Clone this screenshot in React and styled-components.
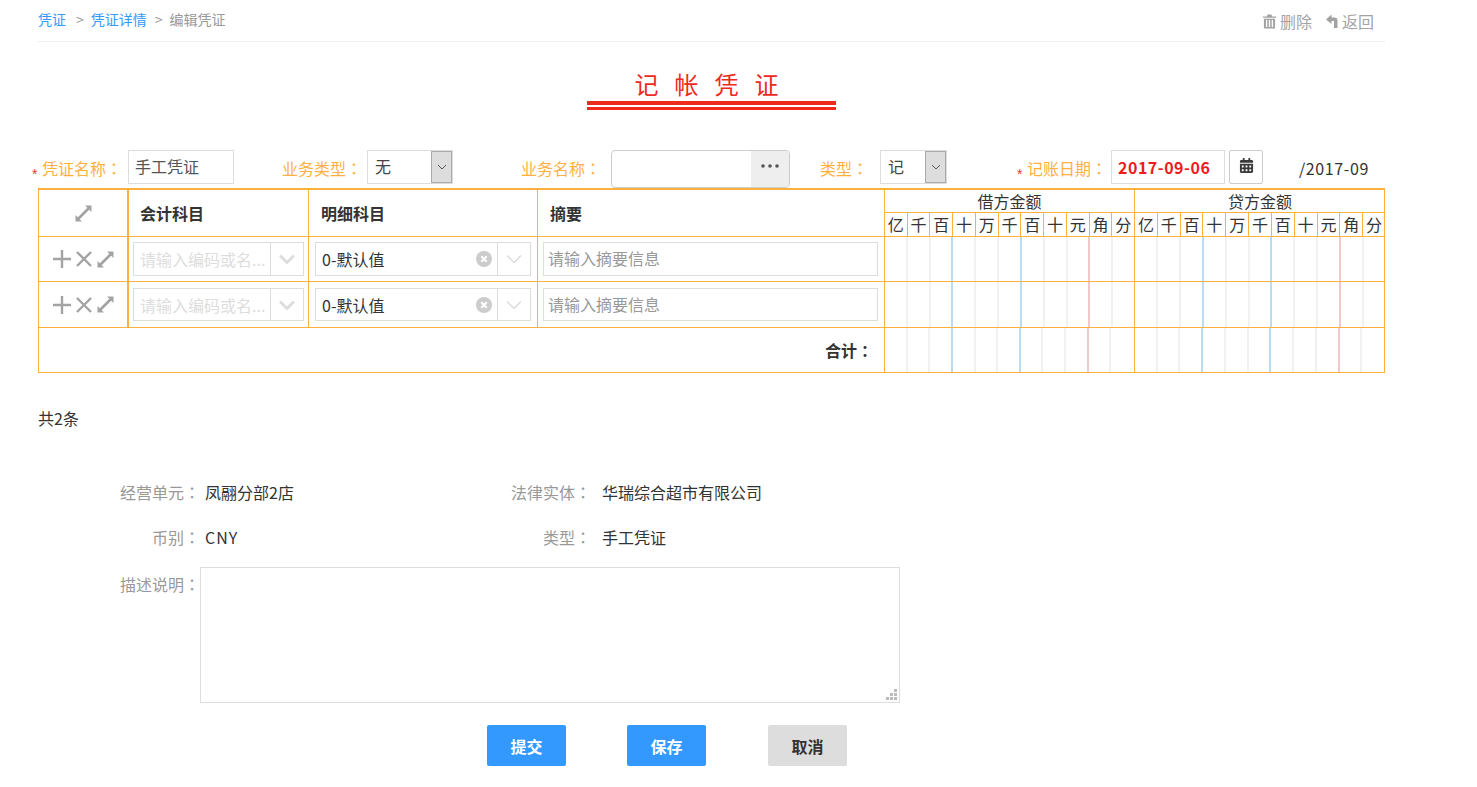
import React from 'react'
import styled, { createGlobalStyle } from 'styled-components'
import { FaCalendarAlt } from 'react-icons/fa'

const GlobalStyle = createGlobalStyle`
  html, body { margin: 0; padding: 0; background: #fff; }
  body {
    font-family: "Noto Sans CJK SC", "Noto Sans", sans-serif;
    color: #333;
  }
  * { box-sizing: border-box; }
`

const DIGITS = ['亿', '千', '百', '十', '万', '千', '百', '十', '元', '角', '分']
const ORANGE = '#ffb03f'

function ResizeIcon() {
  return (
    <svg width="17" height="17" viewBox="0 0 17 17" fill="#a3a3a3">
      <path d="M10 0.5H16.5V7L14.2 4.7 4.7 14.2 7 16.5H0.5V10L2.8 12.3 12.3 2.8Z" />
    </svg>
  )
}

function PlusIcon() {
  return (
    <svg width="18" height="18" viewBox="0 0 18 18" stroke="#a3a3a3" strokeWidth="2.4">
      <path d="M9 0V18M0 9H18" />
    </svg>
  )
}

function CloseIcon() {
  return (
    <svg width="16" height="16" viewBox="0 0 16 16" stroke="#a3a3a3" strokeWidth="2.4">
      <path d="M1 1L15 15M15 1L1 15" />
    </svg>
  )
}

function Chevron({ bold }) {
  return (
    <svg width="16" height="10" viewBox="0 0 16 10" fill="none" stroke="#ddd" strokeWidth={bold ? 3 : 1.5}>
      <path d="M1 1.5L8 8.5L15 1.5" />
    </svg>
  )
}

function ClearIcon() {
  return (
    <svg width="16" height="16" viewBox="0 0 16 16">
      <circle cx="8" cy="8" r="8" fill="#ccc" />
      <path d="M5.3 5.3L10.7 10.7M10.7 5.3L5.3 10.7" stroke="#fff" strokeWidth="2" />
    </svg>
  )
}

function TrashIcon() {
  return (
    <svg width="13" height="15" viewBox="0 0 14 15" fill="#a3a3a3">
      <path d="M5 0H9L10 2H14V3.5H0V2H4ZM1 4.5H13V15H1ZM3.2 6V13.5H4.6V6ZM6.3 6V13.5H7.7V6ZM9.4 6V13.5H10.8V6Z" fillRule="evenodd" />
    </svg>
  )
}

function BackIcon() {
  return (
    <svg width="12" height="14" viewBox="0 0 12 14" fill="#a3a3a3">
      <path d="M5.5 0.5L0 5.5L5.5 10V7H8V14H11.5V6.5C11.5 4.5 10.5 3.5 8.5 3.5H5.5Z" />
    </svg>
  )
}

function SelectArrow() {
  return (
    <svg width="10" height="6" viewBox="0 0 10 6" fill="none" stroke="#555" strokeWidth="1">
      <path d="M1 1L5 5L9 1" />
    </svg>
  )
}

function DotsIcon() {
  return (
    <svg width="18" height="4" viewBox="0 0 18 4" fill="#555">
      <circle cx="2" cy="2" r="1.8" />
      <circle cx="9" cy="2" r="1.8" />
      <circle cx="16" cy="2" r="1.8" />
    </svg>
  )
}

function DigitRow({ total, header }) {
  return (
    <Digits $total={total}>
      {DIGITS.map((d, i) => (
        <Digit key={i} $index={i} $header={header}>{header ? d : ''}</Digit>
      ))}
    </Digits>
  )
}

function EntryRow({ second }) {
  return (
    <Row $height={second ? 46 : 45}>
      <OpsCell>
        <PlusIcon />
        <CloseIcon />
        <ResizeIcon />
      </OpsCell>
      <SubjectCell $pad={second ? '6px 4px 0 4px' : '5px 4px 0 4px'}>
        <ComboBox $height={second ? 33 : 34}>
          <ComboText $placeholder>请输入编码或名...</ComboText>
          <ComboArrow><Chevron bold /></ComboArrow>
        </ComboBox>
      </SubjectCell>
      <DetailCell $pad={second ? '6px 6px 0 6px' : '5px 6px 0 6px'}>
        <ComboBox $height={second ? 33 : 34}>
          <ComboText>0-默认值</ComboText>
          <ClearIcon />
          <ComboArrow $gap><Chevron /></ComboArrow>
        </ComboBox>
      </DetailCell>
      <SummaryCell $pad={second ? '6px 6px 0 5px' : '5px 6px 0 5px'}>
        <SummaryInput $height={second ? 33 : 34}>请输入摘要信息</SummaryInput>
      </SummaryCell>
      <MoneyCell><DigitRow /></MoneyCell>
      <MoneyCell><DigitRow /></MoneyCell>
    </Row>
  )
}

export default function App() {
  return (
    <Page>
      <GlobalStyle />
      <TopBar>
        <Crumbs>
          <CrumbLink>凭证</CrumbLink>
          <CrumbSep $left={10}>&gt;</CrumbSep>
          <CrumbLink>凭证详情</CrumbLink>
          <CrumbSep $left={8}>&gt;</CrumbSep>
          <span>编辑凭证</span>
        </Crumbs>
        <TopActions>
          <TopAction><TrashIcon />删除</TopAction>
          <TopAction><BackIcon />返回</TopAction>
        </TopActions>
      </TopBar>

      <TitleWrap>
        <Title>记 帐 凭 证</Title>
      </TitleWrap>

      <FormRow>
        <Field>
          <Star>*</Star>
          <Label $width={90} $indent>凭证名称<Colon>：</Colon></Label>
          <TextBox $width={106}>手工凭证</TextBox>
        </Field>
        <Field $left={48}>
          <Label $width={85}>业务类型<Colon>：</Colon></Label>
          <NativeSelect $width={86}>
            <span>无</span>
            <SelectBtn><SelectArrow /></SelectBtn>
          </NativeSelect>
        </Field>
        <Field $left={68}>
          <Label $width={90}>业务名称<Colon>：</Colon></Label>
          <InputGroup>
            <GroupBtn><DotsIcon /></GroupBtn>
          </InputGroup>
        </Field>
        <Field $left={30}>
          <Label $width={60}>类型<Colon>：</Colon></Label>
          <NativeSelect $width={67}>
            <span>记</span>
            <SelectBtn><SelectArrow /></SelectBtn>
          </NativeSelect>
        </Field>
        <Field $left={76}>
          <Star>*</Star>
          <Label $width={88} $indent>记账日期<Colon>：</Colon></Label>
          <DateBox>2017-09-06</DateBox>
          <CalendarBtn><FaCalendarAlt size={15} color="#3a3a3a" /></CalendarBtn>
        </Field>
        <Period>/2017-09</Period>
      </FormRow>

      <Voucher>
        <Row $height={47}>
          <OpsCell $head><ResizeIcon /></OpsCell>
          <SubjectCell $head $pad="0 0 0 11px">会计科目</SubjectCell>
          <DetailCell $head>明细科目</DetailCell>
          <SummaryCell $head>摘要</SummaryCell>
          <MoneyCell>
            <MoneyTitle>借方金额</MoneyTitle>
            <DigitRow header />
          </MoneyCell>
          <MoneyCell>
            <MoneyTitle>贷方金额</MoneyTitle>
            <DigitRow header />
          </MoneyCell>
        </Row>
        <EntryRow />
        <EntryRow second />
        <Row $height={44} $last>
          <TotalCell>合计<Colon>：</Colon></TotalCell>
          <MoneyCell><DigitRow total /></MoneyCell>
          <MoneyCell><DigitRow total /></MoneyCell>
        </Row>
      </Voucher>

      <Count>共2条</Count>

      <Details>
        <InfoRow>
          <InfoLabel>经营单元<Colon>：</Colon></InfoLabel>
          <InfoValue $width={306}>凤翮分部2店</InfoValue>
          <InfoLabel $width={80}>法律实体<Colon>：</Colon></InfoLabel>
          <InfoValue $gap={11}>华瑞综合超市有限公司</InfoValue>
        </InfoRow>
        <InfoRow $height={42}>
          <InfoLabel>币别<Colon>：</Colon></InfoLabel>
          <InfoValue $width={306} $spaced>CNY</InfoValue>
          <InfoLabel $width={80}>类型<Colon>：</Colon></InfoLabel>
          <InfoValue $gap={11}>手工凭证</InfoValue>
        </InfoRow>
        <DescRow>
          <DescLabel>描述说明<Colon>：</Colon></DescLabel>
          <DescBox>
            <Grip viewBox="0 0 11 11" width="11" height="11" fill="#bbb">
              <path d="M8 0h3v3H8zM4 4h3v3H4zM8 4h3v3H8zM0 8h3v3H0zM4 8h3v3H4zM8 8h3v3H8z" />
            </Grip>
          </DescBox>
        </DescRow>
      </Details>

      <Buttons>
        <Button $primary>提交</Button>
        <Button $primary>保存</Button>
        <Button>取消</Button>
      </Buttons>
    </Page>
  )
}

const Page = styled.div`
  width: 1477px;
  height: 787px;
  padding: 0 92px 0 38px;
  overflow: hidden;
`

const TopBar = styled.div`
  height: 42px;
  border-bottom: 1px solid #eee;
  display: flex;
  justify-content: space-between;
  align-items: flex-start;
`

const Crumbs = styled.div`
  display: flex;
  font-size: 14px;
  line-height: 20px;
  padding-top: 9px;
  color: #999;
`

const CrumbLink = styled.span`
  color: #3399ff;
`

const CrumbSep = styled.span`
  margin: 0 7px 0 ${p => p.$left}px;
  color: #999;
`

const TopActions = styled.div`
  display: flex;
  gap: 14px;
  padding: 10px 11px 0 0;
`

const TopAction = styled.span`
  display: flex;
  align-items: center;
  gap: 4px;
  font-size: 16px;
  line-height: 22px;
  color: #a3a3a3;
`

const TitleWrap = styled.div`
  display: flex;
  justify-content: center;
  padding-top: 28px;
  height: 108px;
`

const Title = styled.h1`
  margin: 0;
  width: 249px;
  height: 40px;
  padding-right: 5px;
  font-family: "Liberation Serif", "Noto Sans CJK SC", serif;
  font-size: 24px;
  font-weight: 400;
  line-height: 32px;
  letter-spacing: 5px;
  text-align: center;
  color: #ee2a1d;
  border-bottom: 3px solid #ee2a1d;
  position: relative;
  &::after {
    content: "";
    position: absolute;
    left: 0;
    right: 0;
    bottom: 2px;
    height: 4px;
    background: #ee2a1d;
  }
`

const FormRow = styled.div`
  display: flex;
  align-items: flex-start;
  height: 38px;
`

const Field = styled.div`
  display: flex;
  align-items: flex-start;
  position: relative;
  margin-left: ${p => p.$left || 0}px;
`

const Star = styled.span`
  position: absolute;
  left: -6px;
  top: 14px;
  font-family: "Liberation Sans", sans-serif;
  font-size: 14px;
  line-height: 20px;
  color: #e8352a;
`

const Colon = styled.span`
  font-family: "Noto Sans CJK TC", sans-serif;
`

const Label = styled.label`
  width: ${p => p.$width}px;
  padding-left: ${p => (p.$indent ? 4 : 0)}px;
  font-size: 16px;
  line-height: 24px;
  padding-top: 6px;
  color: ${ORANGE};
  white-space: nowrap;
`

const TextBox = styled.div`
  width: ${p => p.$width}px;
  height: 34px;
  border: 1px solid #ddd;
  padding-left: 6px;
  font-size: 16px;
  line-height: 30px;
  color: #555;
`

const NativeSelect = styled.div`
  width: ${p => p.$width}px;
  height: 34px;
  border: 1px solid #ddd;
  display: flex;
  justify-content: space-between;
  font-size: 16px;
  line-height: 30px;
  color: #444;
  padding-left: 7px;
`

const SelectBtn = styled.span`
  width: 21px;
  height: 32px;
  background: #ddd;
  border: 1px solid #aaa;
  display: flex;
  align-items: center;
  justify-content: center;
`

const InputGroup = styled.div`
  width: 179px;
  height: 38px;
  border: 1px solid #ccc;
  border-radius: 4px;
  display: flex;
  justify-content: flex-end;
  overflow: hidden;
`

const GroupBtn = styled.span`
  width: 38px;
  background: #eee;
  display: flex;
  justify-content: center;
  padding-top: 13px;
`

const DateBox = styled.div`
  width: 114px;
  height: 34px;
  border: 1px solid #ddd;
  padding-left: 6px;
  font-size: 16px;
  font-weight: 700;
  letter-spacing: 0.5px;
  line-height: 32px;
  color: #ee1c1c;
`

const CalendarBtn = styled.div`
  width: 34px;
  height: 34px;
  margin-left: 4px;
  border: 1px solid #ccc;
  border-radius: 2px;
  display: flex;
  justify-content: center;
  padding-top: 7px;
`

const Period = styled.div`
  margin-left: 36px;
  padding-top: 6px;
  font-size: 16px;
  letter-spacing: 0.6px;
  line-height: 24px;
  color: #333;
`

const Voucher = styled.div`
  width: 1347px;
  border: 1px solid ${ORANGE};
  border-top-width: 2px;
  font-size: 16px;
`

const Row = styled.div`
  display: flex;
  height: ${p => p.$height}px;
  border-bottom: ${p => (p.$last ? 'none' : `1px solid ${ORANGE}`)};
`

const Cell = styled.div`
  flex: none;
  height: 100%;
  border-right: 1px solid ${ORANGE};
  padding: ${p => p.$pad || (p.$head ? '0 0 0 12px' : '0')};
  font-weight: ${p => (p.$head ? 700 : 400)};
  line-height: 46px;
  color: #333;
`

const OpsCell = styled.div`
  width: 90px;
  flex: none;
  border-right: 2px solid ${ORANGE};
  display: flex;
  align-items: center;
  justify-content: center;
  gap: 5px;
`

const SubjectCell = styled(Cell)`
  width: 180px;
`

const DetailCell = styled(Cell)`
  width: 229px;
`

const SummaryCell = styled(Cell)`
  width: 347px;
`

const TotalCell = styled.div`
  width: 846px;
  flex: none;
  border-right: 1px solid ${ORANGE};
  padding-right: 11px;
  text-align: right;
  font-weight: 700;
  line-height: 44px;
`

const MoneyCell = styled.div`
  width: 250px;
  flex: none;
  height: 100%;
  display: flex;
  flex-direction: column;
  border-right: 1px solid ${ORANGE};
  &:last-child { border-right: none; }
`

const MoneyTitle = styled.div`
  height: 23px;
  border-bottom: 1px solid ${ORANGE};
  text-align: center;
  font-size: 16px;
  line-height: 22px;
`

const Digits = styled.div`
  flex: 1;
  display: flex;
  margin-right: ${p => (p.$total ? 2 : 0)}px;
`

const digitLine = p => {
  if (p.$header) return `1px solid ${ORANGE}`
  if (p.$index === 3 || p.$index === 6) return '2px solid #b8ddf3'
  if (p.$index === 9) return '2px solid #f2c9c9'
  return '2px solid #f1f1f1'
}

const Digit = styled.div`
  flex: 1;
  border-left: ${p => (p.$index === 0 ? 'none' : digitLine(p))};
  text-align: center;
  font-size: 16px;
  line-height: 23px;
  color: #333;
`

const ComboBox = styled.div`
  height: ${p => p.$height}px;
  border: 1px solid #ddd;
  display: flex;
  align-items: center;
  line-height: 30px;
`

const ComboText = styled.span`
  flex: 1;
  padding-left: 6px;
  font-size: 16px;
  white-space: nowrap;
  overflow: hidden;
  color: ${p => (p.$placeholder ? '#ddd' : '#333')};
`

const ComboArrow = styled.span`
  width: 33px;
  height: 100%;
  margin-left: ${p => (p.$gap ? 5 : 0)}px;
  border-left: 1px solid #ddd;
  display: flex;
  align-items: center;
  justify-content: center;
`

const SummaryInput = styled.div`
  height: ${p => p.$height}px;
  border: 1px solid #ddd;
  padding-left: 4px;
  font-size: 16px;
  font-weight: 400;
  line-height: 30px;
  color: #999;
`

const Count = styled.div`
  margin-top: 33px;
  font-size: 16px;
  line-height: 24px;
  color: #333;
`

const Details = styled.div`
  margin-top: 50px;
`

const InfoRow = styled.div`
  display: flex;
  height: ${p => p.$height || 45}px;
  font-size: 16px;
  line-height: 24px;
`

const InfoLabel = styled.span`
  width: ${p => p.$width || 162}px;
  text-align: right;
  white-space: nowrap;
  color: #999;
`

const InfoValue = styled.span`
  width: ${p => (p.$width ? `${p.$width}px` : 'auto')};
  margin-left: ${p => p.$gap || 5}px;
  letter-spacing: ${p => (p.$spaced ? '1px' : '0')};
  color: #333;
`

const DescRow = styled.div`
  display: flex;
  align-items: flex-start;
`

const DescLabel = styled.span`
  width: 162px;
  font-size: 16px;
  line-height: 34px;
  text-align: right;
  color: #999;
`

const DescBox = styled.div`
  position: relative;
  width: 700px;
  height: 136px;
  border: 1px solid #ddd;
`

const Grip = styled.svg`
  position: absolute;
  right: 2px;
  bottom: 2px;
`

const Buttons = styled.div`
  display: flex;
  gap: 61px;
  margin: 22px 0 0 449px;
`

const Button = styled.button`
  width: 79px;
  height: 41px;
  border: none;
  border-radius: 2px;
  padding: 0;
  font-family: inherit;
  font-size: 16px;
  font-weight: 700;
  color: ${p => (p.$primary ? '#fff' : '#333')};
  background: ${p => (p.$primary ? '#3399ff' : '#ddd')};
  &:last-child { margin-left: 1px; }
`
